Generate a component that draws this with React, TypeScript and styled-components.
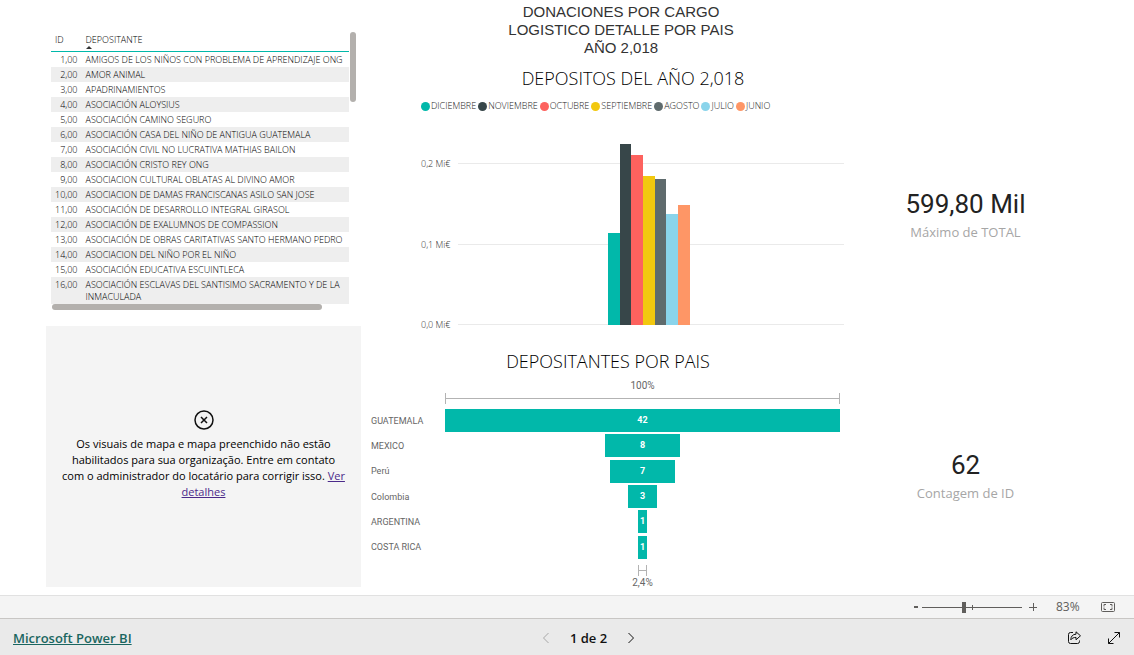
import React from "react";
import styled, { createGlobalStyle } from "styled-components";

const segoe = `"Segoe UI", "Open Sans", "Noto Sans", sans-serif`;
const din = `DIN, Roboto, sans-serif`;
const teal = "#01b8aa";

const GlobalStyle = createGlobalStyle`
  *, *::before, *::after { box-sizing: border-box; }
  body { margin: 0; background: #fff; font-family: ${segoe}; }
  button { padding: 0; border: 0; background: none; font: inherit; color: inherit; cursor: pointer; }
`;

const Page = styled.div`
  display: flex;
  flex-direction: column;
  min-height: 100vh;
`;

const Report = styled.main`
  flex: 1;
  display: grid;
  grid-template-columns: minmax(0, 315fr) minmax(0, 490fr) minmax(0, 229fr);
  padding: 0 54px 0 46px;
`;

const Column = styled.div<{ $bottom?: string }>`
  display: flex;
  flex-direction: column;
  padding-bottom: ${(p) => p.$bottom ?? "0"};
`;

/* ---------- table ---------- */

const TableVisual = styled.section`
  padding: 32px 5px 16px;
`;

const TableBody = styled.div`
  display: flex;
  gap: 1px;
`;

const Scrollbar = styled.div<{ $horizontal?: boolean }>`
  flex: none;
  border-radius: 3px;
  background: #b3b0ad;
  width: ${(p) => (p.$horizontal ? "270px" : "6px")};
  height: ${(p) => (p.$horizontal ? "6px" : "70px")};
  margin-left: ${(p) => (p.$horizontal ? "1px" : "0")};
`;

const Table = styled.table`
  flex: 1;
  min-width: 0;
  table-layout: fixed;
  border-collapse: separate;
  border-spacing: 0;
  font-size: 9px;
  font-weight: 300;
  line-height: 12px;
  color: #000;
`;

const HeadCell = styled.th<{ $width?: string }>`
  width: ${(p) => p.$width ?? "auto"};
  height: 20px;
  padding: 2px 4px 0;
  border-bottom: 1px solid ${teal};
  font-weight: 300;
  text-align: left;
  vertical-align: top;
`;

const SortArrow = styled.svg`
  display: block;
  width: 6px;
  height: 3px;
`;

const Row = styled.tr`
  &:nth-child(even) { background: #eee; }
`;

const Cell = styled.td<{ $numeric?: boolean }>`
  padding: 2px 4px 1px;
  vertical-align: top;
  text-align: ${(p) => (p.$numeric ? "right" : "left")};
`;

const depositantes = [
  "AMIGOS DE LOS NIÑOS CON PROBLEMA DE APRENDIZAJE ONG",
  "AMOR ANIMAL",
  "APADRINAMIENTOS",
  "ASOCIACIÓN ALOYSIUS",
  "ASOCIACIÓN CAMINO SEGURO",
  "ASOCIACIÓN CASA DEL NIÑO DE ANTIGUA GUATEMALA",
  "ASOCIACIÓN CIVIL NO LUCRATIVA MATHIAS BAILON",
  "ASOCIACIÓN CRISTO REY ONG",
  "ASOCIACION CULTURAL OBLATAS AL DIVINO AMOR",
  "ASOCIACION DE DAMAS FRANCISCANAS ASILO SAN JOSE",
  "ASOCIACIÓN DE DESARROLLO INTEGRAL GIRASOL",
  "ASOCIACIÓN DE EXALUMNOS DE COMPASSION",
  "ASOCIACIÓN DE OBRAS CARITATIVAS SANTO HERMANO PEDRO",
  "ASOCIACION DEL NIÑO POR EL NIÑO",
  "ASOCIACIÓN EDUCATIVA ESCUINTLECA",
  "ASOCIACIÓN ESCLAVAS DEL SANTISIMO SACRAMENTO Y DE LA INMACULADA",
];

/* ---------- map message ---------- */

const MapVisual = styled.section`
  flex: 1;
  display: flex;
  flex-direction: column;
  align-items: center;
  justify-content: center;
  gap: 6px;
  padding: 0 16px 4px;
  background: #f4f4f4;
`;

const MapMessage = styled.p`
  margin: 0;
  font-size: 11px;
  line-height: 16px;
  text-align: center;
  color: #000;
`;

const DetailsLink = styled.a`
  color: #4b2a8a;
`;

/* ---------- headings ---------- */

const ReportTitle = styled.h1`
  margin: 0;
  padding: 3px 0 0 30px;
  font: 400 15px/18px "Liberation Sans", Arial, sans-serif;
  text-align: center;
  color: #333;
`;

const VisualTitle = styled.h2<{ $indent: string }>`
  margin: 0;
  padding-left: ${(p) => p.$indent};
  font-size: 18px;
  font-weight: 300;
  line-height: 24px;
  text-align: center;
  color: #000;
`;

/* ---------- column chart ---------- */

const ColumnVisual = styled.section`
  padding: 9px 7px 0 60px;
`;

const TitleRow = styled.div`
  margin: 0 -7px 0 -60px;
`;

const Legend = styled.ul`
  display: flex;
  gap: 2px;
  margin: 10px 0 0;
  padding: 0;
  list-style: none;
  font-size: 9px;
  font-weight: 300;
  line-height: 12px;
  color: #222;
`;

const LegendItem = styled.li`
  display: flex;
  align-items: center;
  gap: 1px;
`;

const Dot = styled.span<{ $color: string }>`
  width: 9px;
  height: 9px;
  border-radius: 50%;
  background: ${(p) => p.$color};
`;

const Plot = styled.div`
  display: flex;
  margin-top: 31px;
`;

const Axis = styled.div`
  flex: none;
  display: flex;
  flex-direction: column;
  justify-content: space-between;
  width: 37px;
  height: 173px;
  margin-top: 15px;
  font-size: 9px;
  font-weight: 300;
  line-height: 12px;
  color: #333;
`;

const PlotArea = styled.svg`
  flex: 1;
  min-width: 0;
  height: 182px;
`;

const months = [
  { name: "DICIEMBRE", color: teal, x: 150, width: 12, height: 92 },
  { name: "NOVIEMBRE", color: "#374649", x: 162, width: 11, height: 181 },
  { name: "OCTUBRE", color: "#fd625e", x: 173, width: 12, height: 170 },
  { name: "SEPTIEMBRE", color: "#f2c80f", x: 185, width: 12, height: 149 },
  { name: "AGOSTO", color: "#5f6b6d", x: 197, width: 11, height: 146 },
  { name: "JULIO", color: "#8ad4eb", x: 208, width: 12, height: 111 },
  { name: "JUNIO", color: "#fe9666", x: 220, width: 12, height: 120 },
];

/* ---------- funnel ---------- */

const FunnelVisual = styled.section`
  display: flex;
  flex-direction: column;
  margin-top: 18px;
`;

const FunnelBody = styled.div`
  display: grid;
  grid-template-columns: 74px minmax(0, 1fr);
  padding: 6px 11px 0 10px;
  font-family: ${din};
`;

const Stages = styled.div`
  grid-column: 1 / -1;
  display: grid;
  grid-template-columns: subgrid;
  grid-template-rows: repeat(6, 1fr);
  align-items: center;
  height: 152px;
  margin: 4px 0 5px;
`;

const StageName = styled.span`
  font-size: 9px;
  line-height: 12px;
  color: #666;
`;

const StageBar = styled.div`
  justify-self: center;
  height: 23px;
  background: ${teal};
  color: #fff;
  font-size: 9px;
  font-weight: 700;
  line-height: 23px;
  text-align: center;
`;

const Rate = styled.div`
  grid-column: 2;
  font-size: 10px;
  line-height: 14px;
  text-align: center;
  color: #666;
`;

const Bracket = styled.div`
  grid-column: 2;
  justify-self: center;
  display: flex;
  align-items: center;
  height: 11px;
  border: solid #b3b3b3;
  border-width: 0 1px;

  &::before {
    content: "";
    flex: 1;
    height: 1px;
    background: #b3b3b3;
  }
`;

const stages = [
  { name: "GUATEMALA", value: 42 },
  { name: "MEXICO", value: 8 },
  { name: "Perú", value: 7 },
  { name: "Colombia", value: 3 },
  { name: "ARGENTINA", value: 1 },
  { name: "COSTA RICA", value: 1 },
];

const share = (value: number) => `${(value / stages[0].value) * 100}%`;

/* ---------- cards ---------- */

const CardColumn = styled.div`
  display: grid;
  grid-template-rows: 261px auto;
  padding-top: 187px;
`;

const Card = styled.section`
  text-align: center;
`;

const CardValue = styled.div`
  font-family: ${din};
  font-size: 26px;
  line-height: 34px;
  color: #222;
`;

const CardLabel = styled.div`
  margin-top: 2px;
  font-size: 13px;
  line-height: 18px;
  color: #a6a6a6;
`;

/* ---------- bottom bars ---------- */

const ZoomBar = styled.div`
  display: flex;
  align-items: center;
  justify-content: flex-end;
  height: 23px;
  padding-right: 18px;
  border-top: 1px solid #e1e1e1;
  background: #f4f4f4;
  font-size: 12px;
  line-height: 16px;
  color: #605e5c;
`;

const ZoomButton = styled.button`
  width: 14px;
  height: 16px;
  display: grid;
  place-items: center;
`;

const ZoomSlider = styled.input`
  appearance: none;
  width: 100px;
  height: 11px;
  margin: 0 3px 0 0;
  background:
    linear-gradient(#605e5c, #605e5c) center / 100% 1px no-repeat,
    linear-gradient(#605e5c, #605e5c) center / 1px 5px no-repeat;

  &::-webkit-slider-thumb {
    appearance: none;
    width: 4px;
    height: 11px;
    background: #605e5c;
  }
`;

const ZoomValue = styled.output`
  width: 24px;
  margin: 0 20px 0 17px;
`;

const FooterBar = styled.footer`
  display: grid;
  grid-template-columns: 1fr auto 1fr;
  align-items: center;
  height: 37px;
  padding: 2px 12px 0 13px;
  border-top: 1px solid #c8c6c4;
  background: #eaeaea;
`;

const BrandLink = styled.a`
  justify-self: start;
  font-size: 13px;
  line-height: 18px;
  font-weight: 600;
  color: #1a6660;
`;

const Pager = styled.nav`
  display: flex;
  align-items: center;
  gap: 16px;
  padding-left: 42px;
  font-size: 13px;
  line-height: 18px;
  font-weight: 600;
  color: #111;
`;

const IconButton = styled.button`
  display: grid;
  place-items: center;
  width: 16px;
  height: 16px;
  &:disabled { opacity: 0.3; cursor: default; }
`;

const Actions = styled.div`
  justify-self: end;
  display: flex;
  gap: 24px;
  color: #111;
`;

const Glyph = ({ d, size = 16, width = 1 }: { d: string; size?: number; width?: number }) => (
  <svg width={size} height={size} viewBox="0 0 16 16" fill="none" stroke="currentColor" strokeWidth={width} aria-hidden>
    <path d={d} />
  </svg>
);

export default function App() {
  return (
    <Page>
      <GlobalStyle />
      <Report>
        <Column $bottom="8px">
          <TableVisual>
            <TableBody>
              <Table>
                <thead>
                  <tr>
                    <HeadCell $width="30px">ID</HeadCell>
                    <HeadCell>
                      DEPOSITANTE
                      <SortArrow viewBox="0 0 6 3" aria-hidden>
                        <path d="M0 3 3 0 6 3z" fill="#333" />
                      </SortArrow>
                    </HeadCell>
                  </tr>
                </thead>
                <tbody>
                  {depositantes.map((name, i) => (
                    <Row key={name}>
                      <Cell $numeric>{i + 1},00</Cell>
                      <Cell>{name}</Cell>
                    </Row>
                  ))}
                </tbody>
              </Table>
              <Scrollbar />
            </TableBody>
            <Scrollbar $horizontal />
          </TableVisual>
          <MapVisual>
            <svg width="20" height="20" viewBox="0 0 20 20" fill="none" stroke="#111" aria-hidden>
              <circle cx="10" cy="10" r="9" strokeWidth="1.5" />
              <path d="M7 7l6 6M13 7l-6 6" strokeWidth="1.5" />
            </svg>
            <MapMessage>
              Os visuais de mapa e mapa preenchido não estão habilitados para sua organização. Entre em contato com o
              administrador do locatário para corrigir isso. <DetailsLink href="#detalhes">Ver detalhes</DetailsLink>
            </MapMessage>
          </MapVisual>
        </Column>

        <Column>
          <ReportTitle>
            DONACIONES POR CARGO
            <br />
            LOGISTICO DETALLE POR PAIS
            <br />
            AÑO 2,018
          </ReportTitle>
          <ColumnVisual>
            <TitleRow>
              <VisualTitle $indent="54px">DEPOSITOS DEL AÑO 2,018</VisualTitle>
            </TitleRow>
            <Legend>
              {months.map((m) => (
                <LegendItem key={m.name}>
                  <Dot $color={m.color} />
                  {m.name}
                </LegendItem>
              ))}
            </Legend>
            <Plot>
              <Axis>
                <span>0,2 Mi€</span>
                <span>0,1 Mi€</span>
                <span>0,0 Mi€</span>
              </Axis>
              <PlotArea viewBox="0 0 386 182" preserveAspectRatio="none" shapeRendering="crispEdges">
                {[20, 101, 181].map((y) => (
                  <rect key={y} x="0" y={y} width="386" height="1" fill="#eaeaea" />
                ))}
                {months.map((m) => (
                  <rect key={m.name} x={m.x} y={182 - m.height} width={m.width} height={m.height} fill={m.color} />
                ))}
              </PlotArea>
            </Plot>
          </ColumnVisual>
          <FunnelVisual>
            <VisualTitle $indent="4px">DEPOSITANTES POR PAIS</VisualTitle>
            <FunnelBody>
              <Rate>100%</Rate>
              <Bracket style={{ width: share(42) }} />
              <Stages>
                {stages.map((s) => (
                  <React.Fragment key={s.name}>
                    <StageName>{s.name}</StageName>
                    <StageBar style={{ width: share(s.value) }}>{s.value}</StageBar>
                  </React.Fragment>
                ))}
              </Stages>
              <Bracket style={{ width: share(1) }} />
              <Rate>2,4%</Rate>
            </FunnelBody>
          </FunnelVisual>
        </Column>

        <CardColumn>
          <Card>
            <CardValue>599,80 Mil</CardValue>
            <CardLabel>Máximo de TOTAL</CardLabel>
          </Card>
          <Card>
            <CardValue>62</CardValue>
            <CardLabel>Contagem de ID</CardLabel>
          </Card>
        </CardColumn>
      </Report>

      <ZoomBar>
        <ZoomButton aria-label="Reduzir">
          <Glyph d="M6 8h4" width={2} />
        </ZoomButton>
        <ZoomSlider type="range" min={0} max={200} defaultValue={83} aria-label="Zoom" />
        <ZoomButton aria-label="Ampliar">
          <Glyph d="M4 8.500h8M8.500 4v8" />
        </ZoomButton>
        <ZoomValue>83%</ZoomValue>
        <IconButton aria-label="Ajustar à página">
          <Glyph d="M2.500 3.500h11a1 1 0 0 1 1 1v7a1 1 0 0 1-1 1h-11a1 1 0 0 1-1-1v-7a1 1 0 0 1 1-1zM4 7.500v-2h2M10 5.500h2v2M12 8.500v2h-2M6 10.500h-2v-2" />
        </IconButton>
      </ZoomBar>
      <FooterBar>
        <BrandLink href="#powerbi">Microsoft Power BI</BrandLink>
        <Pager aria-label="Páginas">
          <IconButton disabled aria-label="Página anterior">
            <Glyph d="M10.500 3 5.500 8l5 5" />
          </IconButton>
          1 de 2
          <IconButton aria-label="Próxima página">
            <Glyph d="M5.500 3l5 5-5 5" />
          </IconButton>
        </Pager>
        <Actions>
          <IconButton aria-label="Compartilhar">
            <Glyph d="M7 2.500h-2.500a2 2 0 0 0-2 2v7a2 2 0 0 0 2 2h7a2 2 0 0 0 2-2v-1M10 1.800l4.500 4-4.500 4v-2.400c-2.400 0-4 .8-5.200 2.400 0-3.400 2-5.600 5.200-5.600z" />
          </IconButton>
          <IconButton aria-label="Tela inteira">
            <Glyph d="M2.500 13.500l11-11M8.500 2.500h5v5M7.500 13.500h-5v-5" />
          </IconButton>
        </Actions>
      </FooterBar>
    </Page>
  );
}
